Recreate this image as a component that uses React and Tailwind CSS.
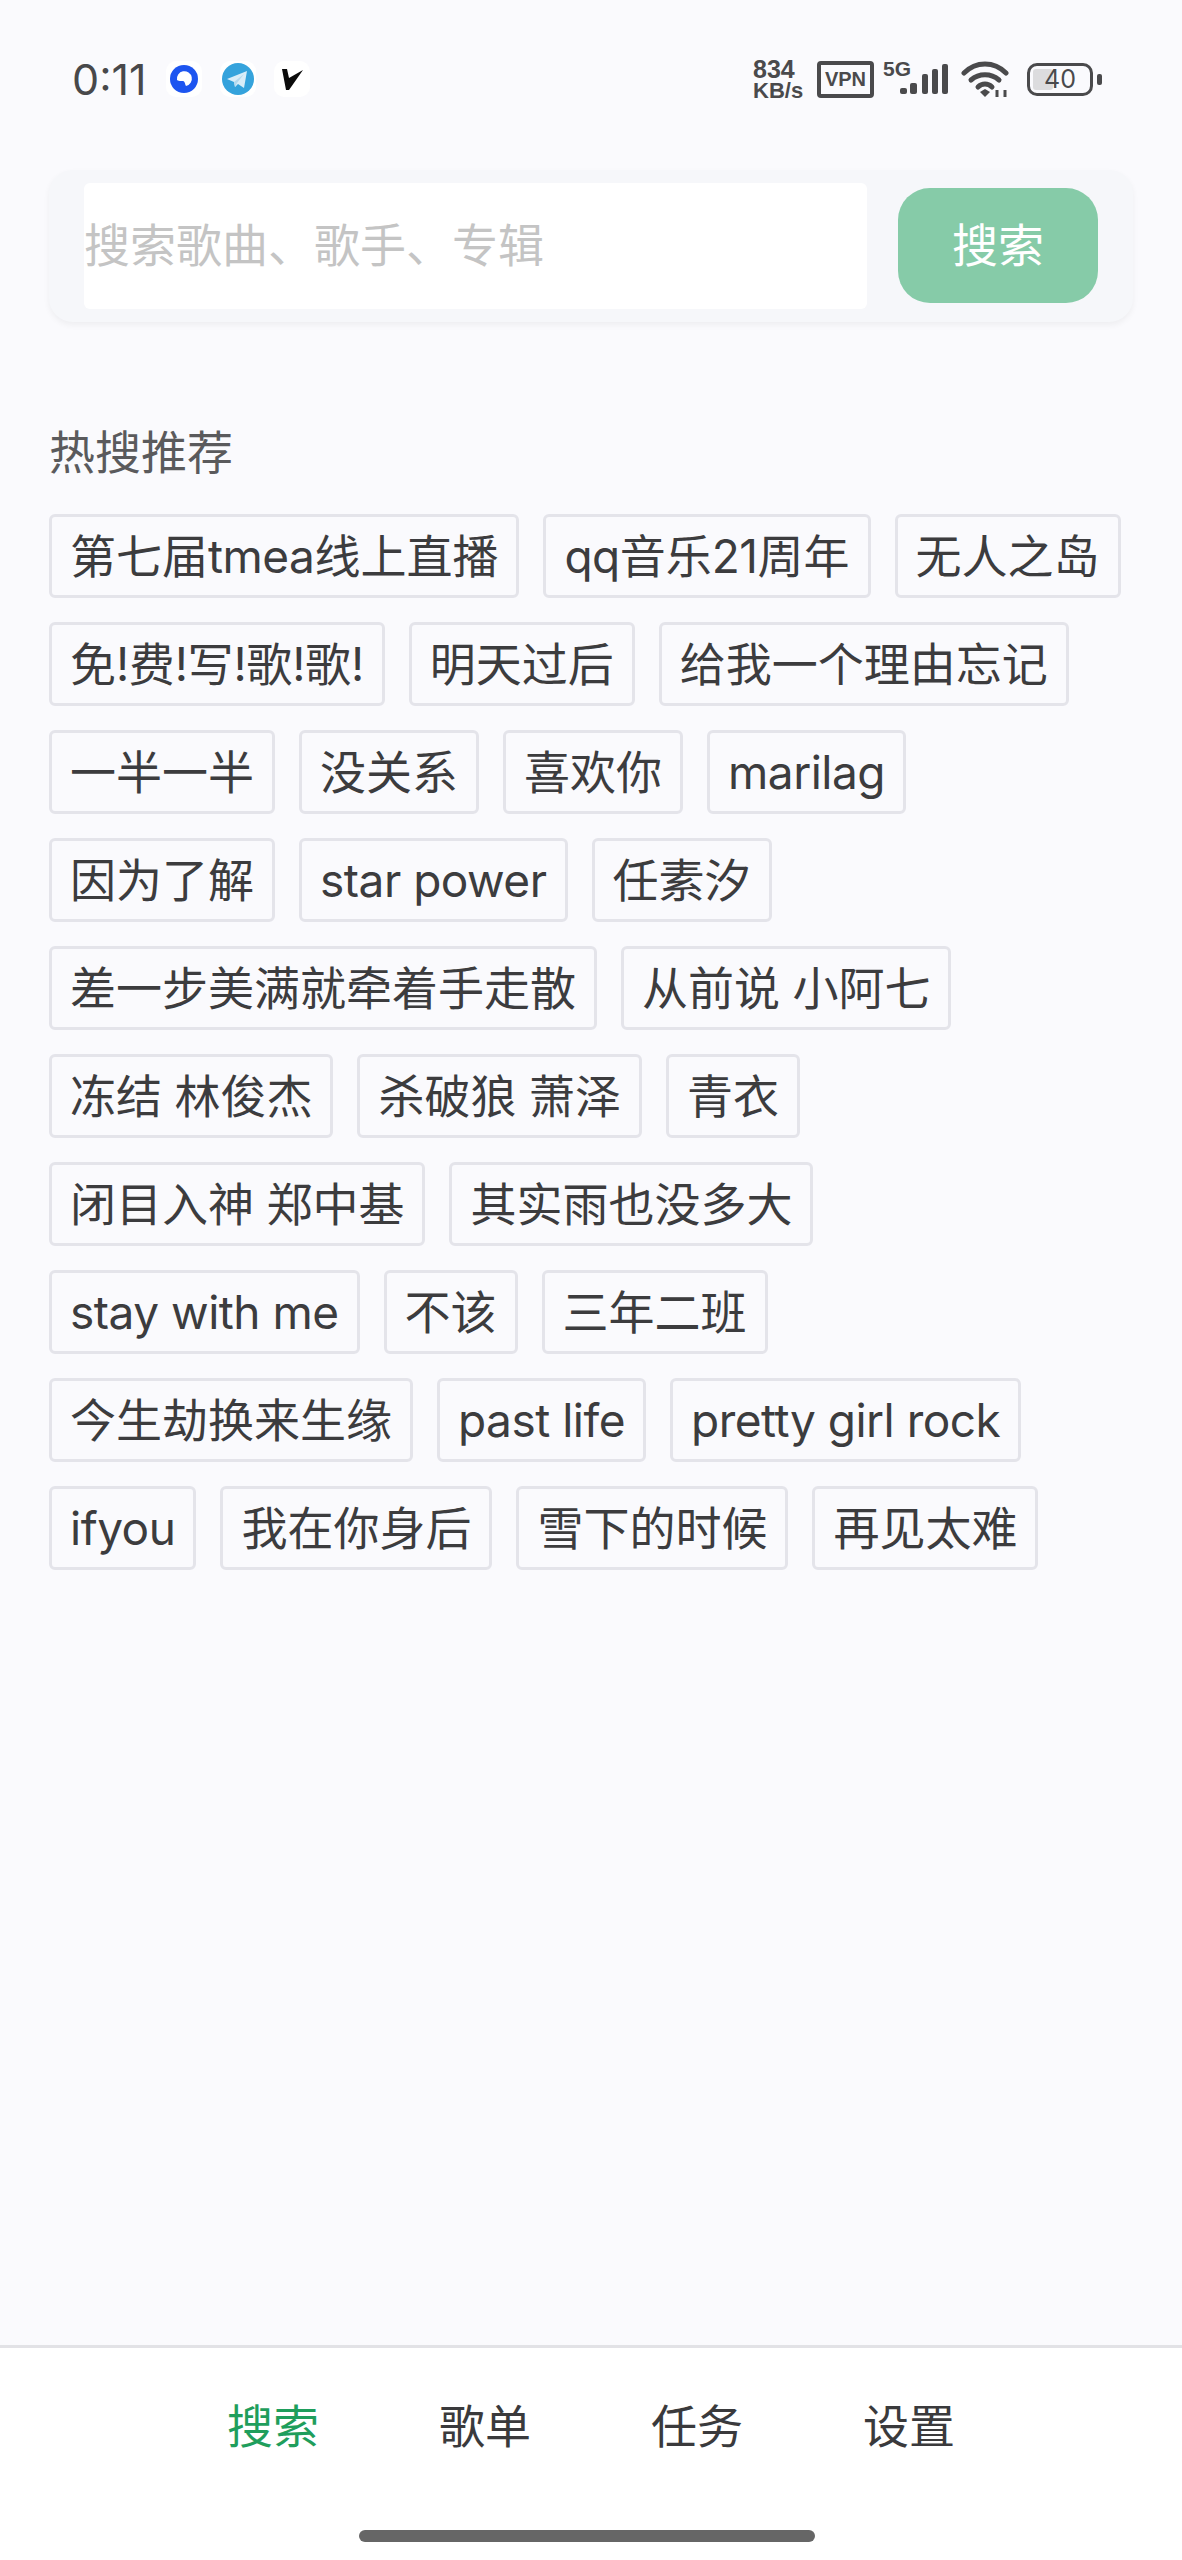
const font = { fontFamily: 'Inter, "Noto Sans CJK SC", sans-serif' };
const statusFont = { fontFamily: '"Liberation Sans", sans-serif' };

const hotSearches = [
  ["第七届tmea线上直播", "qq音乐21周年", "无人之岛"],
  ["免!费!写!歌!歌!", "明天过后", "给我一个理由忘记"],
  ["一半一半", "没关系", "喜欢你", "marilag"],
  ["因为了解", "star power", "任素汐"],
  ["差一步美满就牵着手走散", "从前说 小阿七"],
  ["冻结 林俊杰", "杀破狼 萧泽", "青衣"],
  ["闭目入神 郑中基", "其实雨也没多大"],
  ["stay with me", "不该", "三年二班"],
  ["今生劫换来生缘", "past life", "pretty girl rock"],
  ["ifyou", "我在你身后", "雪下的时候", "再见太难"],
];

const tabs = ["搜索", "歌单", "任务", "设置"];

// latin runs sit a little tighter than Inter's default
function TagText({ text }) {
  return text.split(/([!-~ ]+)/).map((part, i) =>
    i % 2 ? (
      <span key={i} className="tracking-[-0.5px] whitespace-pre">
        {part}
      </span>
    ) : (
      part
    )
  );
}

function AppIcons() {
  return (
    <div className="flex items-center ml-[22px] gap-[18px]">
      <div className="w-[36px] h-[36px] rounded-[10px] bg-white flex items-center justify-center">
        <svg width="30" height="30" viewBox="0 0 30 30">
          <circle cx="15" cy="15" r="14" fill="#1d55f0" />
          <path d="M8 16a7.500 7.500 0 1 1 9 6c-1-1-.5-3-2-4.500s-4 .5-7-1.500z" fill="#fff" />
        </svg>
      </div>
      <div className="w-[36px] h-[36px] rounded-[10px] bg-white flex items-center justify-center">
        <svg width="32" height="32" viewBox="0 0 32 32">
          <circle cx="16" cy="16" r="16" fill="#35a3dc" />
          <path d="M5 16 25 8l-3 17-6-4-3 3-1-5z" fill="#d9edf8" />
          <path d="M12 19 22 11l-7 9-2 4z" fill="#b4d9ee" />
        </svg>
      </div>
      <div className="w-[36px] h-[36px] rounded-[10px] bg-white flex items-center justify-center">
        <svg width="24" height="24" viewBox="0 0 24 24">
          <path d="M2 2h5l2 9L23 3 9 23H6z" fill="#0b0b0b" />
        </svg>
      </div>
    </div>
  );
}

function StatusRight() {
  return (
    <div className="flex items-center h-[50px] text-[#4a4a4c]">
      <div className="flex flex-col w-[54px] pt-[2px] font-bold leading-[22px]" style={statusFont}>
        <span className="text-[25px]">834</span>
        <span className="text-[22px] whitespace-nowrap">KB/s</span>
      </div>
      <div className="ml-[10px] w-[57px] h-[37px] border-[4px] border-[#4a4a4c] rounded-[4px] flex items-center justify-center text-[20px] font-bold leading-none" style={statusFont}>
        VPN
      </div>
      <div className="ml-[9px] relative w-[66px] h-[38px]">
        <span className="absolute left-0 top-0 text-[21px] leading-[18px] font-bold" style={statusFont}>5G</span>
        <svg width="66" height="38" viewBox="0 0 66 38" fill="#4a4a4c">
          <rect x="17" y="28" width="7" height="6" rx="2" />
          <rect x="27" y="23" width="7" height="11" rx="2" />
          <rect x="39" y="14" width="6" height="20" rx="2" />
          <rect x="49" y="9" width="6" height="25" rx="2" />
          <rect x="59" y="4" width="6" height="30" rx="2" />
        </svg>
      </div>
      <svg className="ml-[12px]" width="50" height="38" viewBox="0 0 50 38" fill="none" stroke="#4a4a4c" strokeWidth="5" strokeLinecap="round">
        <path d="M3 13C15 1 33 1 45 13" />
        <path d="M10 20c8-7 20-7 28 0" />
        <path d="M17 27c4-4 10-4 14 0" />
        <path d="M19 32l5-3 5 3-5 5z" fill="#4a4a4c" stroke="none" />
        <path d="M36 30v7M44 30v7" strokeWidth="3" strokeLinecap="butt" />
      </svg>
      <div className="ml-[16px] relative w-[66px] h-[33px] border-[3px] border-[#4a4a4c] rounded-[10px] flex items-center justify-center overflow-hidden">
        <div className="absolute left-[3px] top-[3px] bottom-[3px] w-[20px] bg-[#dcdcde] rounded-[3px]" />
        <span className="relative text-[25px] leading-none">40</span>
      </div>
      <div className="ml-[4px] w-[5px] h-[11px] rounded-[2px] bg-[#4a4a4c]" />
    </div>
  );
}

export default function App() {
  return (
    <div className="w-[1182px] h-[2560px] bg-[#fafafd] flex flex-col overflow-hidden" style={font}>
      <div className="h-[170px] pt-[54px] pl-[72px] pr-[80px] flex items-start justify-between">
        <div className="flex items-center h-[50px]">
          <span className="w-[72px] text-[43px] leading-none text-[#48484a]">0:11</span>
          <AppIcons />
        </div>
        <StatusRight />
      </div>

      <div className="mx-[49px] h-[152px] rounded-[24px] bg-[#f6f7fa] shadow-[0_3px_6px_rgba(0,0,0,0.05)] pl-[35px] pr-[35px] flex items-center justify-between">
        <div className="w-[783px] h-[126px] pb-[2px] bg-white rounded-[6px] flex items-center text-[46px] text-[#c4c4c4]">
          搜索歌曲、歌手、专辑
        </div>
        <button className="w-[200px] h-[115px] mb-[2px] rounded-[32px] bg-[#86cba8] text-white text-[46px]">搜索</button>
      </div>

      <div className="mt-[100px] ml-[49px] text-[46px] leading-[60px] text-[#5a5a5c]">热搜推荐</div>

      <div className="mt-[32px] ml-[49px] flex flex-col gap-[24px]">
        {hotSearches.map((row, i) => (
          <div key={i} className="flex gap-[24px]">
            {row.map((tag) => (
              <div key={tag} className="h-[84px] px-[18px] border-[3px] border-[#e4e4ea] rounded-[6px] flex items-center text-[46px] text-[#3c3c3e] whitespace-nowrap">
                <span>
                  <TagText text={tag} />
                </span>
              </div>
            ))}
          </div>
        ))}
      </div>

      <div className="mt-auto h-[215px] border-t-[3px] border-[#e2e2e6] bg-white flex flex-col items-center">
        <div className="flex justify-center mt-[48px]">
          {tabs.map((t, i) => (
            <div key={t} className={`w-[212px] text-center text-[46px] leading-[60px] ${i === 0 ? "text-[#1f9e5c]" : "text-[#3a3a3c]"}`}>
              {t}
            </div>
          ))}
        </div>
        <div className="mt-[74px] mr-[8px] w-[456px] h-[12px] rounded-full bg-[#666666]" />
      </div>
    </div>
  );
}
